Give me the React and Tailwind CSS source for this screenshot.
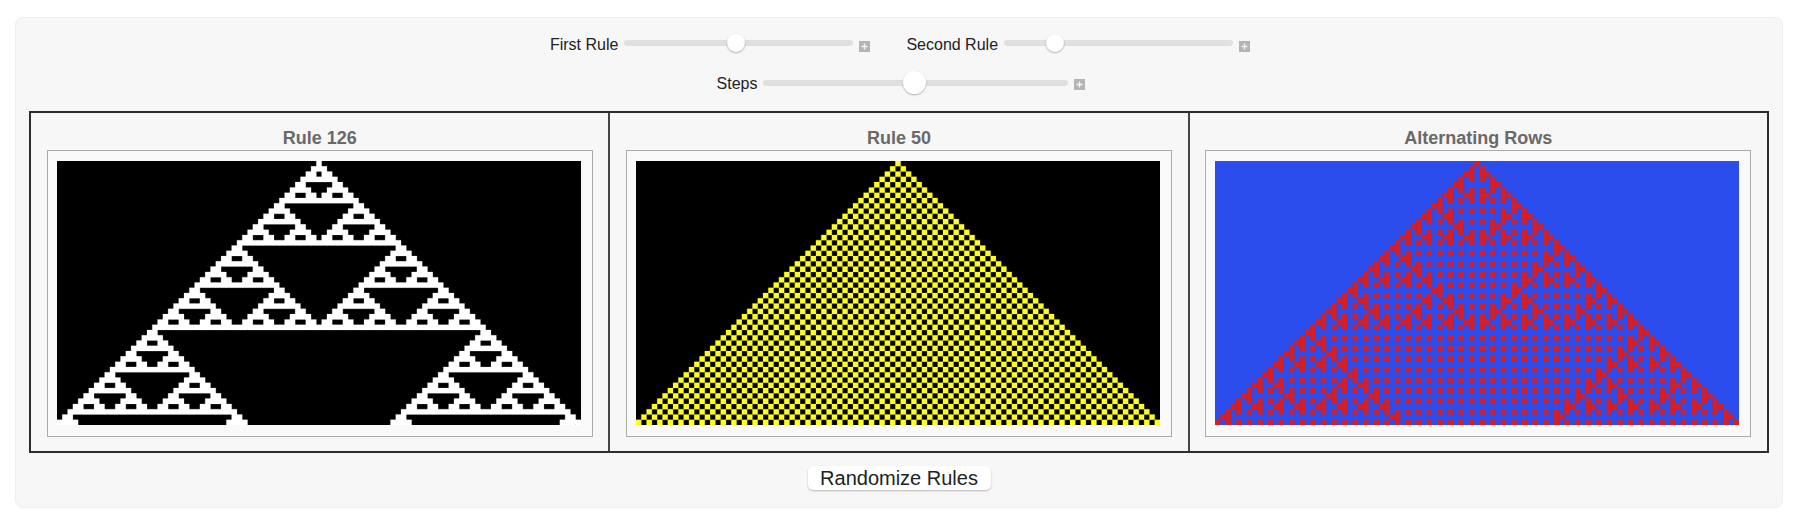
const W = 99;
const H = 50;

function simulate(rule) {
  const rows = [];
  let row = new Array(W).fill(0);
  row[49] = 1;
  rows.push(row);
  for (let i = 1; i < H; i++) {
    const next = row.map((_, x) => {
      const a = x > 0 ? row[x - 1] : 0;
      const b = row[x];
      const c = x < W - 1 ? row[x + 1] : 0;
      return (rule >> (a * 4 + b * 2 + c)) & 1;
    });
    rows.push(next);
    row = next;
  }
  return rows;
}

const rule126 = simulate(126);
const rule50 = simulate(50);
const alternating = rule126.map((r, i) => (i % 2 === 0 ? r : rule50[i]));

function Plot({ rows, bg, fg }) {
  let d = "";
  rows.forEach((r, y) => {
    r.forEach((v, x) => {
      if (v) d += `M${x} ${y}h1v1h-1z`;
    });
  });
  return (
    <svg viewBox={`0 0 ${W} ${H}`} preserveAspectRatio="none" className="block w-[524px] h-[264px]" style={{ background: bg }}>
      <path d={d} fill={fg} stroke={fg} strokeWidth="0.04" />
    </svg>
  );
}

function Plus({ big }) {
  return (
    <svg width="11" height="11" viewBox="0 0 11 11" className={big ? "mt-[3px] shrink-0" : "mt-[7px] shrink-0"}>
      <rect width="11" height="11" fill="#b4b4b4" />
      <path d="M5.5 2.5v6M2.5 5.5h6" stroke="#f4f4f4" strokeWidth="1.4" />
    </svg>
  );
}

function Slider({ label, width, at, big }) {
  return (
    <div className="flex items-center">
      <span className="text-[16px] leading-[18px] pt-[3px] text-[#222] font-['Liberation_Sans',sans-serif] mr-[6px]">{label}</span>
      <div className="relative h-[6px] bg-[#e0e0e0] rounded-full" style={{ width }}>
        <div
          className={
            big
              ? "absolute top-[-9px] w-[23px] h-[23px] -ml-[11.5px] rounded-full bg-white shadow-[0_1px_2px_rgba(0,0,0,0.3)]"
              : "absolute top-[-6px] w-[18px] h-[18px] -ml-[9px] rounded-full bg-white shadow-[0_1px_2px_rgba(0,0,0,0.3)]"
          }
          style={{ left: at }}
        />
      </div>
      <span className="ml-[6px] flex"><Plus big={big} /></span>
    </div>
  );
}

function Cell({ title, first, children }) {
  return (
    <div className={"flex-1 flex flex-col items-center pt-[15px] " + (first ? "" : "border-l-2 border-[#444444]")}>
      <div className="text-[18px] leading-[21px] font-bold text-[#696969] font-['Liberation_Sans',sans-serif] mb-[1px]">{title}</div>
      <div className="w-[546px] h-[287px] border border-[#ababab] bg-[#f9f9f9] pt-[10px] pl-[9px]">
        {children}
      </div>
    </div>
  );
}

export default function App() {
  return (
    <div className="w-[1798px] h-[528px] bg-white pt-[17px] px-[15px]">
      <div className="h-[491px] rounded-[8px] bg-[#f7f7f7] border border-[#eeeeee] px-[13px] flex flex-col items-stretch">
        <div className="flex justify-center items-center gap-[36px] h-[44px] pt-[6px] pl-[2px]">
          <Slider label="First Rule" width={229} at={112} />
          <Slider label="Second Rule" width={229} at={51} />
        </div>
        <div className="flex justify-center items-center h-[38px] pt-[3px] ml-[4px]">
          <Slider label="Steps" width={305} at={151} big />
        </div>
        <div className="mt-[11px] h-[342px] border-2 border-[#2e2e2e] flex">
          <Cell title="Rule 126" first><Plot rows={rule126} bg="#000000" fg="#ffffff" /></Cell>
          <Cell title="Rule 50"><Plot rows={rule50} bg="#000000" fg="#ffff1f" /></Cell>
          <Cell title="Alternating Rows"><Plot rows={alternating} bg="#2b4ded" fg="#d42026" /></Cell>
        </div>
        <div className="flex justify-center mt-[13px]">
          <button className="w-[183px] h-[24px] rounded-[5px] bg-white shadow-[0_1px_2px_rgba(0,0,0,0.25)] text-[20px] leading-[24px] text-[#222] font-['Liberation_Sans',sans-serif]">
            Randomize Rules
          </button>
        </div>
      </div>
    </div>
  );
}
